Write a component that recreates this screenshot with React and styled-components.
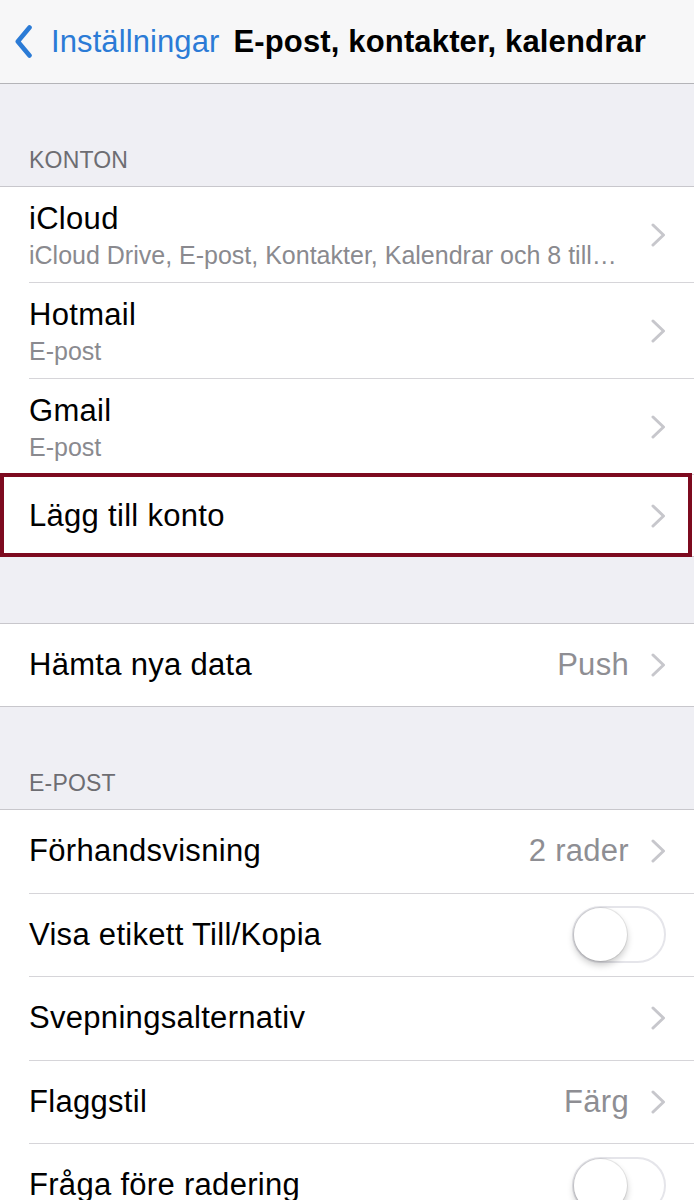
import React from 'react';
import styled, { createGlobalStyle } from 'styled-components';

const GlobalStyle = createGlobalStyle`
  html, body {
    margin: 0;
    padding: 0;
    background: #efeff4;
    font-family: "Liberation Sans", Arial, sans-serif;
    -webkit-font-smoothing: antialiased;
  }
`;

const Page = styled.div`
  width: 694px;
  min-height: 1200px;
  background: #efeff4;
  overflow: hidden;
`;

const NavBar = styled.header`
  height: 83px;
  display: flex;
  align-items: center;
  padding-left: 15px;
  background: #f7f7f8;
  border-bottom: 1px solid #b4b4b8;
  box-sizing: content-box;
`;

const BackButton = styled.div`
  display: flex;
  align-items: center;
  gap: 19px;
  color: #2b7bd6;
  font-size: 31px;
  line-height: 36px;
  letter-spacing: 0.1px;
`;

const NavTitle = styled.h1`
  margin: 0 0 0 14px;
  font-size: 31px;
  line-height: 36px;
  font-weight: 700;
  color: #000;
  white-space: nowrap;
  letter-spacing: 0.15px;
`;

const SectionHeader = styled.div`
  height: ${(p) => p.$height}px;
  display: flex;
  align-items: flex-end;
  padding: 0 29px 14px;
  box-sizing: border-box;
  font-size: 23px;
  line-height: 23px;
  color: #6d6d72;
  letter-spacing: 0.2px;
`;

const Group = styled.section`
  background: #fff;
  border-top: 1px solid #c8c7cc;
  border-bottom: 1px solid #c8c7cc;
`;

const Row = styled.div`
  position: relative;
  padding-left: 29px;
  background: #fff;
`;

const RowInner = styled.div`
  display: flex;
  align-items: center;
  min-height: ${(p) => p.$height}px;
  padding-right: 28px;
  border-bottom: ${(p) => (p.$last ? 'none' : '1px solid #d6d5d9')};
`;

const Texts = styled.div`
  flex: 1;
  min-width: 0;
  display: flex;
  flex-direction: column;
  gap: 4px;
  padding: ${(p) => (p.$tall ? '14px 0 13px' : '0')};
`;

const Title = styled.div`
  font-size: 31px;
  line-height: 36px;
  color: #000;
  white-space: nowrap;
  letter-spacing: 0.3px;
`;

const Subtitle = styled.div`
  font-size: 25px;
  line-height: 28px;
  color: #8a8a8f;
  white-space: nowrap;
  overflow: hidden;
  text-overflow: ellipsis;
  padding-right: 30px;
`;

const Value = styled.span`
  font-size: 31px;
  line-height: 36px;
  color: #8e8e93;
  margin-right: 22px;
  letter-spacing: 0.3px;
`;

const Highlight = styled.div`
  position: absolute;
  top: -2px;
  left: 0;
  right: 2px;
  bottom: -1px;
  border: 4px solid #7d0a1f;
  pointer-events: none;
`;

const Gap = styled.div`
  height: ${(p) => p.$height}px;
`;

const Track = styled.div`
  width: 94px;
  height: 57px;
  box-sizing: border-box;
  border: 2px solid #e5e5ea;
  border-radius: 29px;
  background: #fff;
  display: flex;
  align-items: center;
`;

const Knob = styled.div`
  width: 53px;
  height: 53px;
  border-radius: 50%;
  background: #fff;
  box-shadow: 0 4px 7px rgba(0, 0, 0, 0.22), 0 0 0 1px rgba(0, 0, 0, 0.08);
`;

const Chevron = () => (
  <svg width="15" height="24" viewBox="0 0 15 24">
    <path d="M2 2 L12.5 12 L2 22" fill="none" stroke="#c7c7cc" strokeWidth="3" strokeLinecap="round" strokeLinejoin="round" />
  </svg>
);

const BackChevron = () => (
  <svg width="17" height="33" viewBox="0 0 17 33">
    <path d="M14.5 2.5 L2.8 16.5 L14.5 30.5" fill="none" stroke="#2b7bd6" strokeWidth="4.6" strokeLinecap="round" strokeLinejoin="round" />
  </svg>
);

const Toggle = () => (
  <Track>
    <Knob />
  </Track>
);

const SettingsRow = ({ title, subtitle, value, toggle, last, highlighted, height = 82.5 }) => (
  <Row>
    <RowInner $height={subtitle ? 95 : height} $last={last}>
      <Texts $tall={!!subtitle}>
        <Title>{title}</Title>
        {subtitle && <Subtitle>{subtitle}</Subtitle>}
      </Texts>
      {value && <Value>{value}</Value>}
      {toggle ? <Toggle /> : <Chevron />}
    </RowInner>
    {highlighted && <Highlight />}
  </Row>
);

export default function App() {
  return (
    <Page>
      <GlobalStyle />
      <NavBar>
        <BackButton>
          <BackChevron />
          <span>Inställningar</span>
        </BackButton>
        <NavTitle>E-post, kontakter, kalendrar</NavTitle>
      </NavBar>

      <SectionHeader $height={102}>KONTON</SectionHeader>
      <Group>
        <SettingsRow title="iCloud" subtitle="iCloud Drive, E-post, Kontakter, Kalendrar och 8 till…" />
        <SettingsRow title="Hotmail" subtitle="E-post" />
        <SettingsRow title="Gmail" subtitle="E-post" />
        <SettingsRow title="Lägg till konto" last highlighted height={81} />
      </Group>

      <Gap $height={66} />
      <Group>
        <SettingsRow title="Hämta nya data" value="Push" last height={82} />
      </Group>

      <SectionHeader $height={102}>E-POST</SectionHeader>
      <Group>
        <SettingsRow title="Förhandsvisning" value="2 rader" />
        <SettingsRow title="Visa etikett Till/Kopia" toggle />
        <SettingsRow title="Svepningsalternativ" />
        <SettingsRow title="Flaggstil" value="Färg" />
        <SettingsRow title="Fråga före radering" toggle last />
      </Group>
    </Page>
  );
}
